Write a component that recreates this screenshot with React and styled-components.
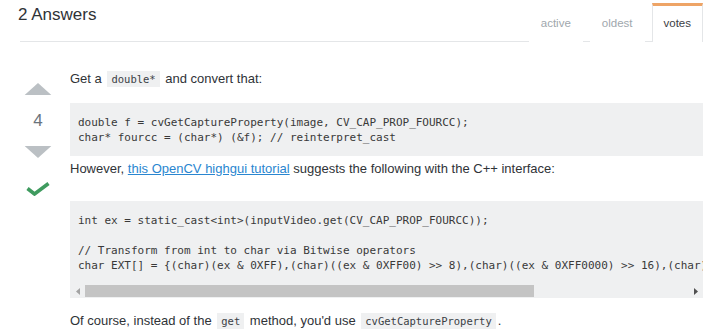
import styled, { createGlobalStyle } from "styled-components";

const GlobalStyle = createGlobalStyle`
  body {
    margin: 0;
    background: #fff;
    font-family: "Liberation Sans", Arial, sans-serif;
    color: #242729;
  }
`;

const mono = `"DejaVu Sans Mono", "Liberation Mono", monospace`;

const App = () => {
  return (
    <>
      <GlobalStyle />
      <Page>
        <Header>
          <Title>2 Answers</Title>
          <Tabs>
            <Tab>active</Tab>
            <Tab>oldest</Tab>
            <Tab $active>votes</Tab>
          </Tabs>
        </Header>

        <AnswerRow>
          <VoteCell>
            <VoteArrow viewBox="0 0 36 16" preserveAspectRatio="none">
              <path d="M2 16h32L18 0z" />
            </VoteArrow>
            <VoteCount>4</VoteCount>
            <VoteArrow viewBox="0 0 36 16" preserveAspectRatio="none">
              <path d="M2 0h32L18 16z" />
            </VoteArrow>
            <Accepted viewBox="0 0 24 14">
              <path d="M1.5 6.5L8.5 12L22.5 1.5" />
            </Accepted>
          </VoteCell>

          <PostBody>
            <Para>
              Get a <InlineCode>double*</InlineCode> and convert that:
            </Para>
            <CodeBlock $top={15}>
              <CodeText>
                {`double f = cvGetCaptureProperty(image, CV_CAP_PROP_FOURCC);
char* fourcc = (char*) (&f); // reinterpret_cast`}
              </CodeText>
            </CodeBlock>
            <Para $top={4}>
              However, <Link href="#">this OpenCV highgui tutorial</Link>{" "}
              suggests the following with the C++ interface:
            </Para>
            <CodeBlock $top={23}>
              <CodeText>
                {`int ex = static_cast<int>(inputVideo.get(CV_CAP_PROP_FOURCC));

// Transform from int to char via Bitwise operators
char EXT[] = {(char)(ex & 0XFF),(char)((ex & 0XFF00) >> 8),(char)((ex & 0XFF0000) >> 16),(char)((ex & 0XFF000000) >> 24),0};`}
              </CodeText>
              <Scrollbar>
                <ScrollButton>
                  <svg width="4" height="7" viewBox="0 0 4 7">
                    <path d="M4 0v7L0 3.5z" fill="#a3a3a3" />
                  </svg>
                </ScrollButton>
                <ScrollTrack>
                  <ScrollThumb $width={449} />
                </ScrollTrack>
                <ScrollButton>
                  <svg width="4" height="7" viewBox="0 0 4 7">
                    <path d="M0 0v7L4 3.5z" fill="#505050" />
                  </svg>
                </ScrollButton>
              </Scrollbar>
            </CodeBlock>
            <Para $top={14}>
              Of course, instead of the <InlineCode>get</InlineCode> method,
              you'd use <InlineCode>cvGetCaptureProperty</InlineCode>.
            </Para>
          </PostBody>
        </AnswerRow>
      </Page>
    </>
  );
};

export default App;

const Page = styled.div`
  width: 720px;
  height: 336px;
  box-sizing: border-box;
  padding: 0 17px 0 18px;
  overflow: hidden;
`;

const Header = styled.div`
  display: flex;
  justify-content: space-between;
  height: 42px;
  box-sizing: border-box;
  border-bottom: 1px solid #e4e6e8;
  margin-left: 2px;
`;

const Title = styled.h2`
  margin: 0 0 0 -2px;
  padding-top: 5px;
  font-size: 17px;
  font-weight: normal;
  line-height: 20px;
  color: #2f3337;
`;

const Tabs = styled.div`
  display: flex;
  align-items: stretch;
  padding-top: 3px;
`;

const Tab = styled.div`
  display: flex;
  align-items: center;
  padding: 0 11px 2px;
  margin-left: 7px;
  margin-bottom: -1px;
  font-size: 11.5px;
  color: ${(p) => (p.$active ? "#3b4045" : "#a0a7ad")};
  background: #fff;
  border: 1px solid ${(p) => (p.$active ? "#e4e6e8" : "transparent")};
  border-top: 3px solid ${(p) => (p.$active ? "#eea466" : "transparent")};
  border-bottom: none;
`;

const AnswerRow = styled.div`
  display: flex;
  padding-top: 28px;
`;

const VoteCell = styled.div`
  width: 40px;
  margin-right: 12px;
  display: flex;
  flex-direction: column;
  align-items: center;
  padding-top: 13px;
`;

const VoteArrow = styled.svg`
  width: 30px;
  height: 12px;
  fill: #bbc0c4;
`;

const VoteCount = styled.div`
  margin: 16px 0 15px;
  font-size: 17px;
  line-height: 20px;
  color: #6a737c;
`;

const Accepted = styled.svg`
  width: 24px;
  height: 14px;
  margin-top: 24px;
  fill: none;
  stroke: #3f9b5f;
  stroke-width: 3.6;
  stroke-linejoin: miter;
`;

const PostBody = styled.div`
  flex: 1;
  min-width: 0;
`;

const Para = styled.p`
  margin: ${(p) => p.$top || 0}px 0 0;
  font-size: 13px;
  line-height: 18px;
  color: #2f3337;
`;

const InlineCode = styled.code`
  font-family: ${mono};
  font-size: 10.5px;
  padding: 2px 4px;
  margin: 0 2px;
  background: #eff0f1;
  color: #3b4045;
`;

const Link = styled.a`
  color: #2a86d0;
  text-decoration: underline;
`;

const CodeBlock = styled.div`
  margin-top: ${(p) => p.$top}px;
  background: #eff0f1;
  padding-bottom: 1px;
`;

const CodeText = styled.pre`
  margin: 0;
  padding: 12px 8px 10px;
  overflow: hidden;
  font-family: ${mono};
  font-size: 11px;
  line-height: 15px;
  color: #393939;
  white-space: pre;
`;

const Scrollbar = styled.div`
  display: flex;
  height: 12px;
  margin-top: 2px;
`;

const ScrollButton = styled.div`
  width: 15px;
  display: flex;
  align-items: center;
  justify-content: center;
`;

const ScrollTrack = styled.div`
  flex: 1;
  display: flex;
`;

const ScrollThumb = styled.div`
  width: ${(p) => p.$width}px;
  background: #c4c4c4;
`;
